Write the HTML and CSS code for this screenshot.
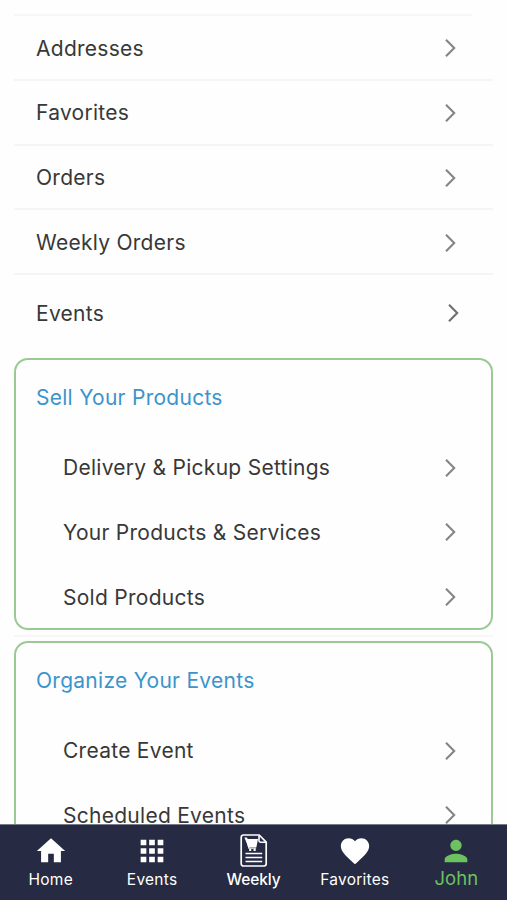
FILE: index.html
```
<!DOCTYPE html>
<html lang="en">
<head>
  <meta charset="UTF-8" />
  <meta name="viewport" content="width=device-width, initial-scale=1.0"/>
  <title>Account</title>
  <link rel="stylesheet" href="styles.css">
</head>
<body>

  <!-- Shared icons -->
  <svg class="sprite">
    <symbol id="chevron" viewBox="0 0 12 20">
      <path d="M2 1.8 L10.2 10 L2 18.2" fill="none" stroke="currentColor" stroke-width="2.1"/>
    </symbol>
  </svg>

  <main class="content">
    <div class="top-line"></div>
    <a class="row"><span>Addresses</span><svg class="chevron"><use href="#chevron"/></svg></a>
    <a class="row"><span>Favorites</span><svg class="chevron"><use href="#chevron"/></svg></a>
    <a class="row"><span>Orders</span><svg class="chevron"><use href="#chevron"/></svg></a>
    <a class="row"><span>Weekly Orders</span><svg class="chevron"><use href="#chevron"/></svg></a>
    <a class="row row-events"><span>Events</span><svg class="chevron"><use href="#chevron"/></svg></a>

    <section class="card">
      <h2>Sell Your Products</h2>
      <a class="sub-row"><span>Delivery &amp; Pickup Settings</span><svg class="chevron"><use href="#chevron"/></svg></a>
      <a class="sub-row"><span>Your Products &amp; Services</span><svg class="chevron"><use href="#chevron"/></svg></a>
      <a class="sub-row"><span>Sold Products</span><svg class="chevron"><use href="#chevron"/></svg></a>
    </section>

    <div class="divider"></div>

    <section class="card">
      <h2>Organize Your Events</h2>
      <a class="sub-row"><span>Create Event</span><svg class="chevron"><use href="#chevron"/></svg></a>
      <a class="sub-row"><span>Scheduled Events</span><svg class="chevron"><use href="#chevron"/></svg></a>
    </section>
  </main>

  <!-- Bottom navigation -->
  <nav class="tab-bar">
    <a class="tab">
      <svg width="34" height="34" viewBox="0 0 24 24"><path fill="currentColor" d="M10 20v-6h4v6h5v-8h3L12 3 2 12h3v8z"/></svg>
      <span>Home</span>
    </a>
    <a class="tab">
      <svg width="34" height="34" viewBox="0 0 24 24"><path fill="currentColor" d="M4 8h4V4H4v4zm6 12h4v-4h-4v4zm-6 0h4v-4H4v4zm0-6h4v-4H4v4zm6 0h4v-4h-4v4zm6-10v4h4V4h-4zm-6 4h4V4h-4v4zm6 6h4v-4h-4v4zm0 6h4v-4h-4v4z"/></svg>
      <span>Events</span>
    </a>
    <a class="tab">
      <svg width="28" height="34" viewBox="0 0 28 34">
        <path d="M3.4 1h15.8l7 7.2v21.6a2.2 2.2 0 0 1-2.2 2.2H3.4a2.2 2.2 0 0 1-2.2-2.2V3.2A2.2 2.2 0 0 1 3.4 1z" fill="none" stroke="currentColor" stroke-width="1.7"/>
        <path d="M19 1.2v5.3a1.8 1.8 0 0 0 1.8 1.8h5.2" fill="none" stroke="currentColor" stroke-width="1.6"/>
        <path d="M4.4 3.6h2.6l.6 1.4h10.4l-1.6 8.2H8.6z" fill="currentColor"/>
        <path d="M6.2 4.3l2.7 9.9h7.2" fill="none" stroke="currentColor" stroke-width="1.3"/>
        <circle cx="10.2" cy="15.9" r="1.2" fill="currentColor"/>
        <circle cx="14.6" cy="15.9" r="1.2" fill="currentColor"/>
        <path d="M5.5 19.5h16.7M5.5 23.5h16.7M5.5 27.5h16.7" fill="none" stroke="currentColor" stroke-width="1.5"/>
      </svg>
      <span class="tab-strong">Weekly</span>
    </a>
    <a class="tab">
      <svg width="34" height="34" viewBox="0 0 24 24"><path fill="currentColor" d="M12 21.35l-1.45-1.32C5.4 15.36 2 12.28 2 8.5 2 5.42 4.42 3 7.5 3c1.74 0 3.41.81 4.5 2.09C13.09 3.81 14.76 3 16.5 3 19.58 3 22 5.42 22 8.5c0 3.78-3.4 6.86-8.55 11.54L12 21.35z"/></svg>
      <span>Favorites</span>
    </a>
    <a class="tab active">
      <svg width="34" height="34" viewBox="0 0 24 24"><path fill="currentColor" d="M12 12c2.21 0 4-1.79 4-4s-1.79-4-4-4-4 1.79-4 4 1.79 4 4 4zm0 2c-2.67 0-8 1.34-8 4v2h16v-2c0-2.66-5.33-4-8-4z"/></svg>
      <span>John</span>
    </a>
  </nav>

</body>
</html>
```
FILE: styles.css
```
* {
  box-sizing: border-box;
}

body {
  margin: 0;
  height: 900px;
  display: flex;
  flex-direction: column;
  overflow: hidden;
  background-color: #fefefe;
  color: #383838;
  font-family: Inter, Roboto, sans-serif;
  font-size: 21px;
  letter-spacing: 0.27px;
}

.sprite {
  display: none;
}

.content {
  flex: 1;
  min-height: 0;
  overflow: hidden;
  padding: 14px 14px 0;
}

.top-line {
  height: 2px;
  margin-right: 21px;
  background-color: #f7f7f7;
}

.row,
.sub-row {
  display: flex;
  align-items: center;
  justify-content: space-between;
  height: 64.8px;
}

.row {
  padding: 1.5px 37px 0 22px;
  border-bottom: 2px solid #f5f5f5;
}

.row-events {
  height: 83px;
  padding: 0 34px 7px 22px;
  border-bottom: none;
}

.chevron {
  width: 12px;
  height: 20px;
  color: #858585;
}

.row-events .chevron {
  color: #707070;
}

.card {
  height: 272px;
  padding: 0 35px 0 20px;
  border: 2px solid #9aca94;
  border-radius: 14px;
}

.card h2 {
  margin: 0;
  height: 75px;
  line-height: 75px;
  font-size: 21px;
  font-weight: 400;
  color: #3b94cb;
}

.sub-row {
  padding-left: 27px;
}

.divider {
  height: 2px;
  margin: 5px 0 4px;
  background-color: #f7f7f7;
}

.tab-bar {
  display: flex;
  height: 76px;
  background-color: #262a42;
  border-top: 1px solid #777a88;
}

.tab {
  flex: 1;
  display: flex;
  flex-direction: column;
  align-items: center;
  padding-top: 9px;
  color: #fff;
  font-size: 15.5px;
  letter-spacing: 0.25px;
}

.tab span {
  line-height: 24px;
}

.tab-strong {
  font-weight: 500;
  letter-spacing: -0.1px;
}

.tab.active {
  color: #6cc261;
}

.tab.active span {
  line-height: 20px;
  font-size: 18.5px;
  letter-spacing: 0;
}
```
